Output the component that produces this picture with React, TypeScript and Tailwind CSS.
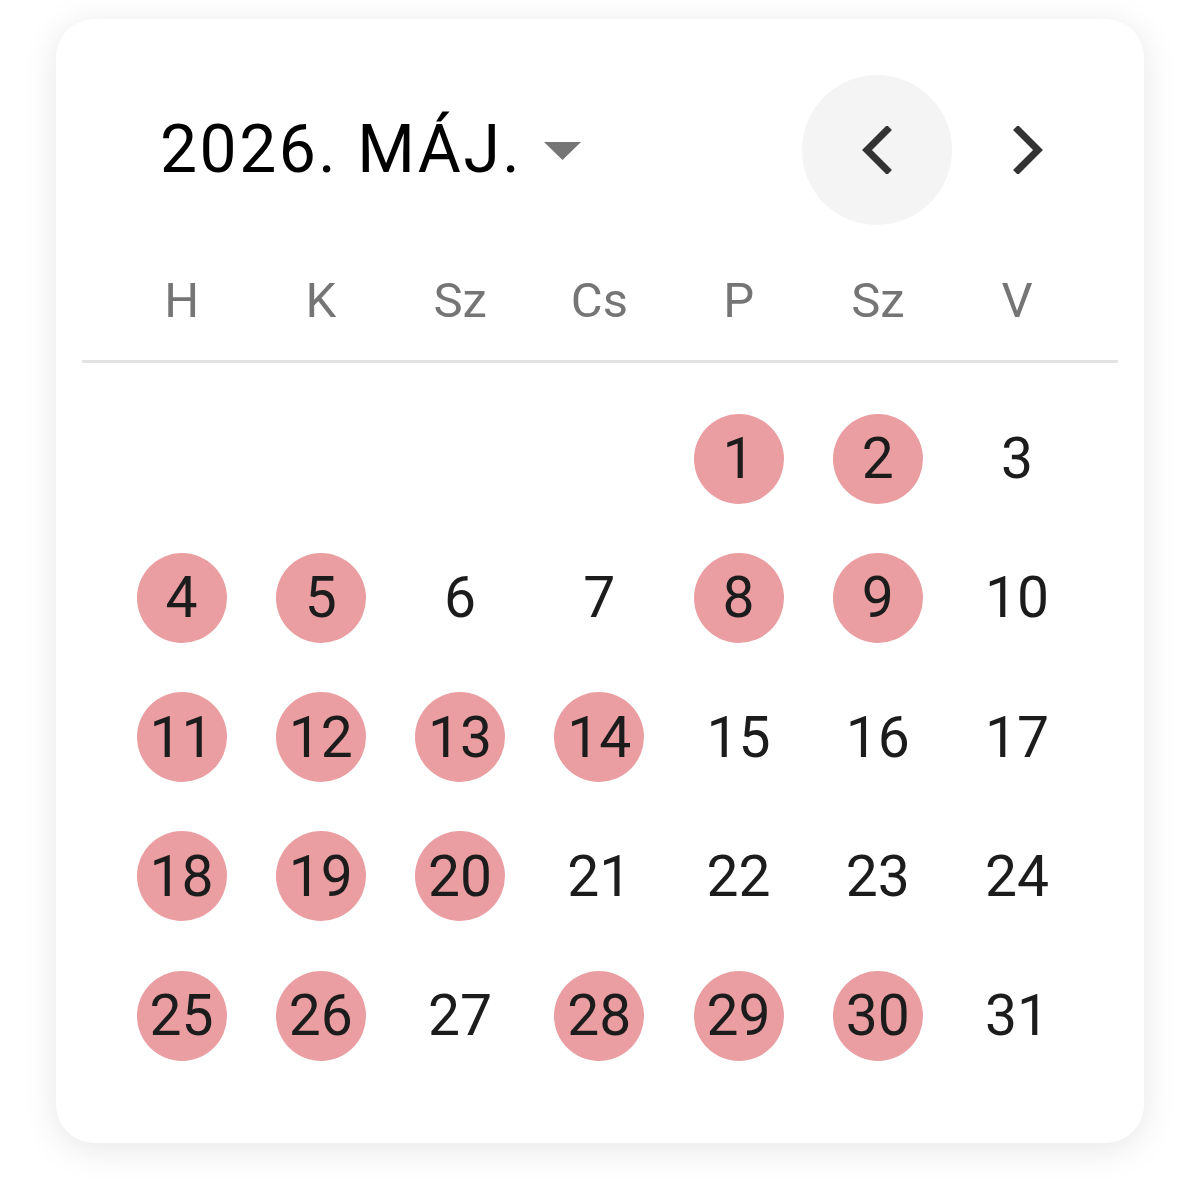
import React from "react";

const highlighted = new Set([1, 2, 4, 5, 8, 9, 11, 12, 13, 14, 18, 19, 20, 25, 26, 28, 29, 30]);
const weekdays = ["H", "K", "Sz", "Cs", "P", "Sz", "V"];

export default function App() {
  const offset = 4;
  const cells: (number | null)[] = [];
  for (let i = 0; i < offset; i++) cells.push(null);
  for (let d = 1; d <= 31; d++) cells.push(d);

  return (
    <div className="w-[1200px] h-[1191px] bg-white pt-[19px] pl-[56px]" style={{ fontFamily: "Roboto, 'Noto Sans', sans-serif" }}>
      <div className="w-[1088px] h-[1124px] bg-white rounded-[38px] shadow-[0_6px_36px_rgba(0,0,0,0.10)] pt-[56px]">
        {/* Header */}
        <div className="flex items-center h-[150px] pl-[104px] pr-[41px]">
          <div className="flex items-center">
            <span className="text-[66px] font-normal tracking-[2.5px] text-black leading-none">2026. MÁJ.</span>
            <svg width="37" height="18" viewBox="0 0 37 18" className="ml-[22px] mt-[2px]">
              <polygon points="0,0 37,0 18.5,18" fill="#757575" />
            </svg>
          </div>
          <div className="flex-1" />
          <button className="w-[150px] h-[150px] rounded-full bg-[#f4f4f4] flex items-center justify-center">
            <svg width="44" height="48" viewBox="0 0 44 48">
              <polyline points="32,4 12,24 32,44" fill="none" stroke="#333333" strokeWidth="7" strokeLinecap="square" />
            </svg>
          </button>
          <button className="w-[150px] h-[150px] rounded-full flex items-center justify-center ml-[1px]">
            <svg width="44" height="48" viewBox="0 0 44 48">
              <polyline points="12,4 32,24 12,44" fill="none" stroke="#333333" strokeWidth="7" strokeLinecap="square" />
            </svg>
          </button>
        </div>

        {/* Weekdays */}
        <div className="grid grid-cols-[repeat(7,139.25px)] pl-[56px] mt-[25px] h-[100px] items-center">
          {weekdays.map((w, i) => (
            <div key={i} className="text-center text-[49px] text-[#757575] leading-none">{w}</div>
          ))}
        </div>

        <div className="mx-[26px] mt-[10px] h-[3px] bg-[#e3e3e3]" />

        {/* Days */}
        <div className="grid grid-cols-[repeat(7,139.25px)] auto-rows-[139.25px] pl-[56px] mt-[26px]">
          {cells.map((d, i) => (
            <div key={i} className="flex items-center justify-center">
              {d !== null && (
                <div
                  className={
                    "w-[90px] h-[90px] rounded-full flex items-center justify-center text-[57px] leading-none text-[#1c1c1c] " +
                    (highlighted.has(d) ? "bg-[#ea9ea1]" : "")
                  }
                >
                  {d}
                </div>
              )}
            </div>
          ))}
        </div>
      </div>
    </div>
  );
}
